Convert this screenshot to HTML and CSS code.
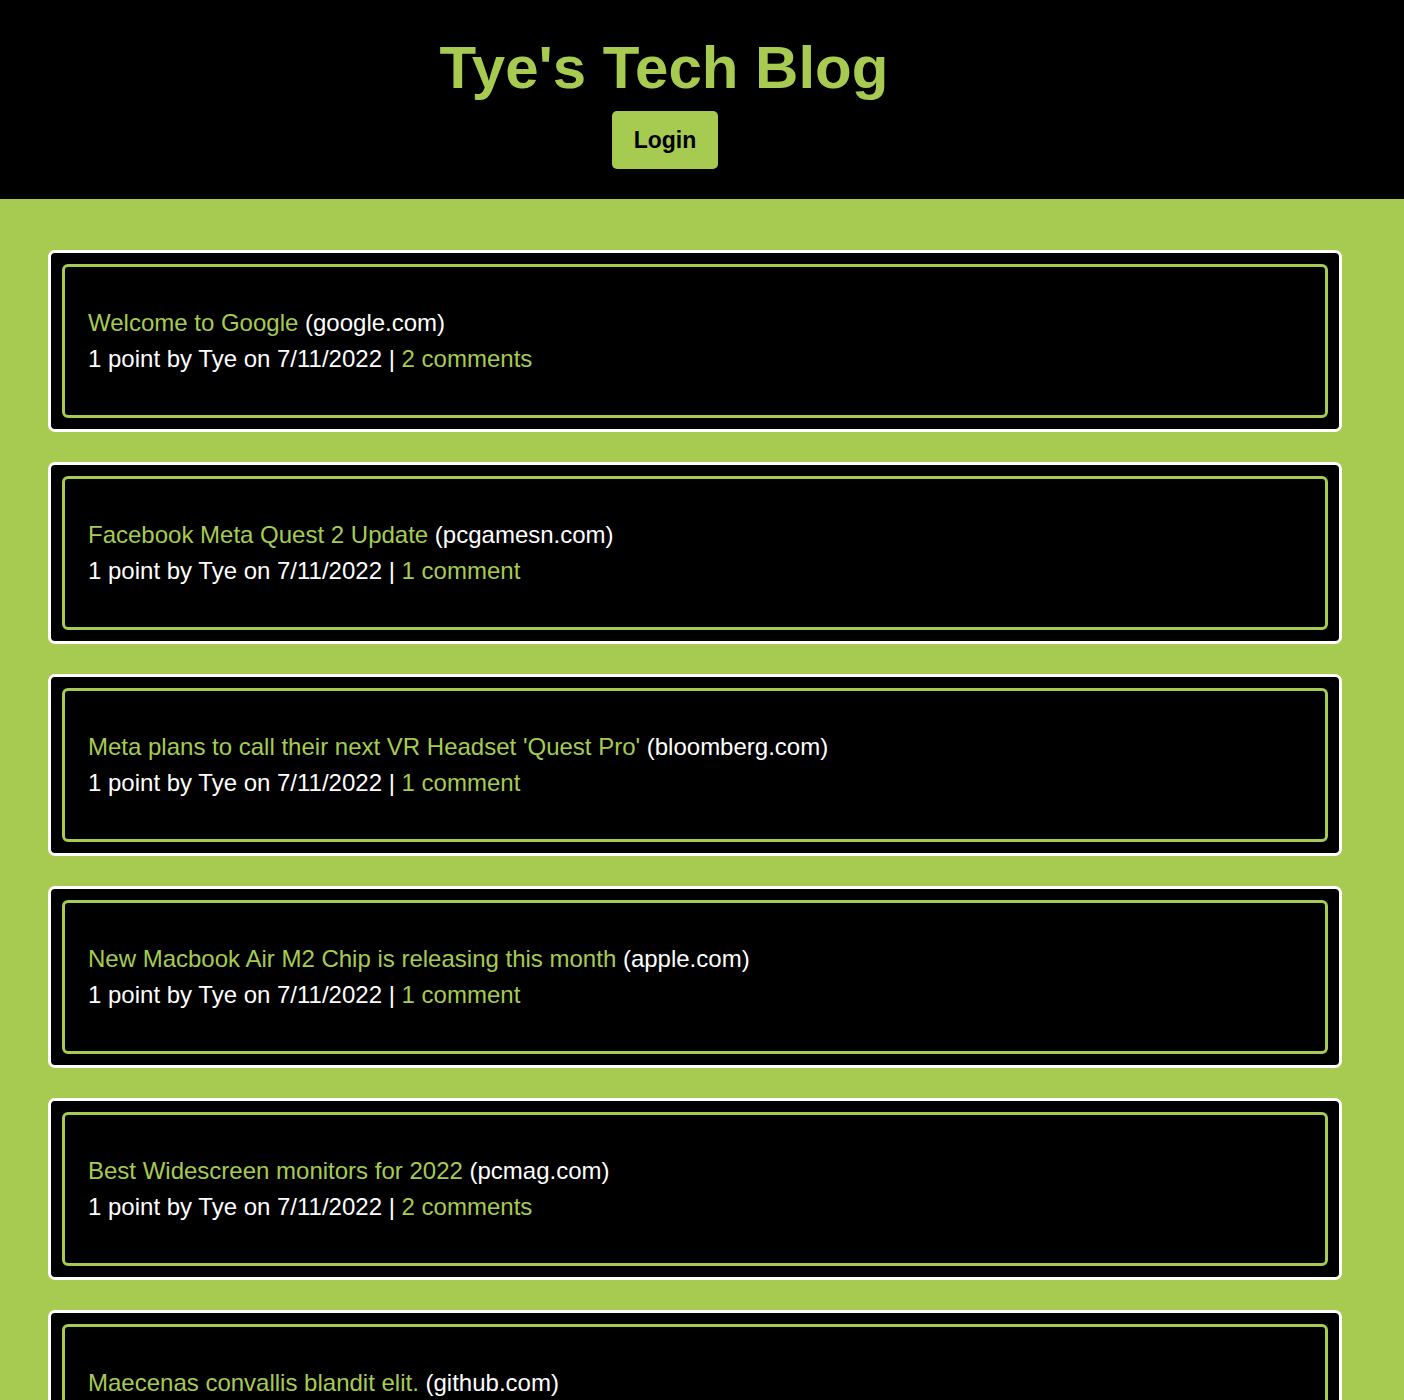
FILE: index.html
```html
<!DOCTYPE html>
<html lang="en">
<head>
<meta charset="utf-8">
<title>Tye's Tech Blog</title>
<link rel="stylesheet" href="styles.css">
</head>
<body>
<header class="site-header">
  <h1 class="site-title">Tye's Tech Blog</h1>
  <a class="login-btn" href="#">Login</a>
</header>
<main class="posts">
  <article class="post">
    <div class="post-inner">
      <p class="post-title"><a href="#">Welcome to Google</a> (google.com)</p>
      <p class="post-meta">1 point by Tye on 7/11/2022 | <a href="#">2 comments</a></p>
    </div>
  </article>
  <article class="post">
    <div class="post-inner">
      <p class="post-title"><a href="#">Facebook Meta Quest 2 Update</a> (pcgamesn.com)</p>
      <p class="post-meta">1 point by Tye on 7/11/2022 | <a href="#">1 comment</a></p>
    </div>
  </article>
  <article class="post">
    <div class="post-inner">
      <p class="post-title"><a href="#">Meta plans to call their next VR Headset 'Quest Pro'</a> (bloomberg.com)</p>
      <p class="post-meta">1 point by Tye on 7/11/2022 | <a href="#">1 comment</a></p>
    </div>
  </article>
  <article class="post">
    <div class="post-inner">
      <p class="post-title"><a href="#">New Macbook Air M2 Chip is releasing this month</a> (apple.com)</p>
      <p class="post-meta">1 point by Tye on 7/11/2022 | <a href="#">1 comment</a></p>
    </div>
  </article>
  <article class="post">
    <div class="post-inner">
      <p class="post-title"><a href="#">Best Widescreen monitors for 2022</a> (pcmag.com)</p>
      <p class="post-meta">1 point by Tye on 7/11/2022 | <a href="#">2 comments</a></p>
    </div>
  </article>
  <article class="post">
    <div class="post-inner">
      <p class="post-title"><a href="#">Maecenas convallis blandit elit.</a> (github.com)</p>
      <p class="post-meta">1 point by Tye on 7/11/2022 | <a href="#">3 comments</a></p>
    </div>
  </article>
</main>
</body>
</html>
```

FILE: styles.css
```css
* { box-sizing: border-box; }

body {
  margin: 0;
  background: #a7cb51;
  font-family: "Liberation Sans", Arial, Helvetica, sans-serif;
  color: #fff;
}

.site-header {
  background: #000;
  display: flex;
  flex-direction: column;
  align-items: center;
  padding: 33px 76px 30px 0;
  height: 199px;
}

.site-title {
  margin: 0 0 9px;
  font-size: 60px;
  line-height: 69px;
  font-weight: bold;
  color: #a7cb51;
}

.login-btn {
  display: block;
  background: #a7cb51;
  color: #000;
  font-weight: bold;
  font-size: 23px;
  line-height: 26px;
  padding: 16px 22px;
  border-radius: 5px;
  text-decoration: none;
  margin-left: 2px;
}

.posts {
  display: flex;
  flex-direction: column;
  gap: 30px;
  padding: 51px 62px 40px 48px;
}

.post {
  background: #000;
  border: 3px solid #fff;
  border-radius: 7px;
  padding: 11px;
}

.post-inner {
  border: 3px solid #a7cb51;
  border-radius: 6px;
  padding: 38px 23px;
}

.post-inner p {
  margin: 0;
  font-size: 24px;
  line-height: 36px;
  color: #fff;
}

.post-inner a {
  color: #a7cb51;
  text-decoration: none;
}
```
